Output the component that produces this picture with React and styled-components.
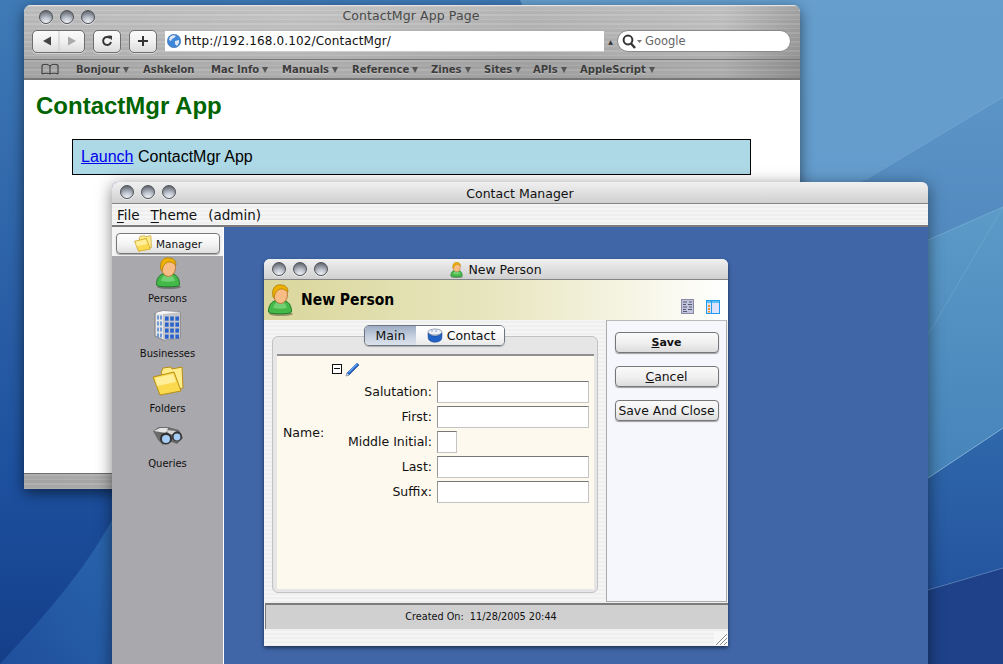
import React from 'react';
import styled, { createGlobalStyle } from 'styled-components';

const Global = createGlobalStyle`
  html, body { margin: 0; padding: 0; height: 100%; background: #3f78b4; }
  #root { height: 100%; }
  * { box-sizing: border-box; }
`;

const UI = `"DejaVu Sans", "Liberation Sans", sans-serif`;
const brushed = `
  repeating-linear-gradient(180deg, rgba(255,255,255,.07) 0 2px, rgba(0,0,0,.025) 2px 5px, rgba(255,255,255,.05) 5px 6px, rgba(0,0,0,.04) 6px 9px),
  linear-gradient(90deg, rgba(255,255,255,.0) 0%, rgba(255,255,255,.12) 35%, rgba(0,0,0,.03) 65%, rgba(255,255,255,.08) 90%, rgba(0,0,0,.14) 100%)
`;
const pinstripe = `repeating-linear-gradient(180deg, #f5f5f5 0 2px, #efefef 2px 4px)`;

const Desktop = styled.div`
  position: relative;
  width: 1003px;
  height: 664px;
  overflow: hidden;
  font-family: ${UI};
  background: linear-gradient(180deg, #3f7ab6 0%, #2a5fa6 45%, #1c4f9d 74%, #153e88 100%);
`;
const Wallpaper = styled.svg`
  position: absolute;
  inset: 0;
`;

const BrowserWindow = styled.div`
  position: absolute;
  left: 24px;
  top: 5px;
  width: 776px;
  height: 484px;
  display: flex;
  flex-direction: column;
  border-radius: 7px 7px 0 0;
  overflow: hidden;
  background: #fff;
  box-shadow: 0 4px 14px rgba(0,0,0,.55);
`;
const MetalTop = styled.div`
  height: 54px;
  flex: none;
  padding: 0 8px;
  display: flex;
  flex-direction: column;
  background: ${brushed}, linear-gradient(180deg, #c2c2c2 0%, #b0b0b0 100%);
  box-shadow: inset 0 1px 0 #e4e4e4;
`;
const MetalTitleRow = styled.div`
  position: relative;
  height: 24px;
  flex: none;
  display: flex;
  align-items: center;
  justify-content: center;
`;
const TrafficGroup = styled.div`
  position: absolute;
  left: ${p => p.$left}px;
  top: ${p => p.$top}px;
  display: flex;
  gap: ${p => p.$gap}px;
`;
const Dot = styled.span`
  display: block;
  width: ${p => p.$s}px;
  height: ${p => p.$s}px;
  border-radius: 50%;
  border: 1px solid #4f5257;
  background: radial-gradient(circle at 50% 100%, #f4f6fa 0%, #c0c6d0 40%, #686d76 85%);
  box-shadow: 0 1px 0 rgba(255,255,255,.5);
`;
const MetalTitle = styled.div`
  font-size: 12.5px;
  color: #4a4a4a;
  position: relative;
  left: -1px;
  top: -2px;
  letter-spacing: .1px;
`;
const ToolRow = styled.div`
  display: flex;
  align-items: center;
  height: 24px;
`;
const ToolBtn = styled.div`
  width: ${p => p.$w}px;
  height: 23px;
  flex: none;
  margin-right: ${p => p.$mr}px;
  border: 1px solid #6d6d6d;
  border-radius: 5px;
  background: linear-gradient(180deg, #fafafa 0%, #f0f0f0 50%, #dcdcdc 100%);
  display: flex;
  align-items: center;
  justify-content: center;
  box-shadow: 0 1px 0 rgba(255,255,255,.5);
`;
const UrlField = styled.div`
  width: 439px;
  height: 21px;
  flex: none;
  background: #fff;
  display: flex;
  align-items: center;
  padding-left: 2px;
  gap: 3px;
  font-size: 12px;
  letter-spacing: .15px;
  color: #111;
  border-bottom: 1px solid #ccc;
`;
const Snap = styled.div`
  width: 13px;
  flex: none;
  text-align: center;
  font-size: 6px;
  color: #333;
`;
const SearchField = styled.div`
  width: 174px;
  height: 22px;
  flex: none;
  background: #fff;
  border-radius: 11px;
  border: 1px solid #8a8a8a;
  display: flex;
  align-items: center;
  padding-left: 3px;
  font-size: 11.5px;
  color: #666;
  gap: 0;
`;
const BookmarkBar = styled.div`
  height: 21px;
  flex: none;
  display: flex;
  align-items: center;
  padding-left: 17px;
  border-top: 1px solid #777;
  border-bottom: 2px solid #777;
  background: ${brushed}, #a9a9a9;
`;
const BookIcon = styled.svg`
  flex: none;
  margin-right: 17px;
`;
const Bookmark = styled.div`
  width: ${p => p.$w}px;
  flex: none;
  font-size: 10px;
  font-weight: 700;
  color: #3c3c3c;
  white-space: nowrap;
  display: flex;
  align-items: center;
  gap: 3px;
  text-shadow: 0 1px 0 rgba(255,255,255,.3);
`;
const Arrow = styled.span`
  width: 0;
  height: 0;
  border-left: 3.5px solid transparent;
  border-right: 3.5px solid transparent;
  border-top: 6px solid #555;
  margin-top: 1px;
`;
const Page = styled.div`
  flex: 1;
  background: #fff;
  padding: 12px 13px 0 12px;
  font-family: "Liberation Sans", Arial, sans-serif;
`;
const Heading = styled.h1`
  margin: 0 0 19px;
  font-size: 24px;
  line-height: 28px;
  font-weight: 700;
  color: #006400;
`;
const LaunchBox = styled.div`
  margin-left: 36px;
  width: 679px;
  height: 36px;
  border: 1px solid #000;
  background: #add8e6;
  font-size: 16px;
  line-height: 34px;
  padding-left: 8px;
  color: #000;
  a { color: #0000ee; text-decoration: underline; }
`;
const MetalBottom = styled.div`
  height: 16px;
  flex: none;
  border-top: 1px solid #6e6e6e;
  background: ${brushed}, #aaa;
`;

const AppWindow = styled.div`
  position: absolute;
  left: 112px;
  top: 182px;
  width: 816px;
  height: 500px;
  display: flex;
  flex-direction: column;
  border-radius: 6px 6px 0 0;
  overflow: hidden;
  background: #4066a8;
  box-shadow: 0 3px 16px rgba(0,0,0,.5);
`;
const AquaTitle = styled.div`
  position: relative;
  height: ${p => p.$h}px;
  flex: none;
  display: flex;
  align-items: center;
  justify-content: center;
  gap: 5px;
  padding-top: 1px;
  font-size: 12.5px;
  color: #111;
  background: linear-gradient(180deg, #f0f0f0 0%, #d0d0d0 100%);
  border-bottom: 1px solid #848484;
`;
const MenuBar = styled.div`
  height: 23px;
  flex: none;
  display: flex;
  align-items: center;
  padding-left: 5px;
  gap: 11px;
  font-size: 13.5px;
  color: #111;
  background: ${pinstripe};
  border-bottom: 2px solid #7b7b7b;
  white-space: pre;
  u { text-underline-offset: 2px; }
`;
const AppBody = styled.div`
  flex: 1;
  display: flex;
  min-height: 0;
`;
const Sidebar = styled.div`
  width: 112px;
  flex: none;
  background: #a9a8ad;
  border-right: 1px solid #fff;
  display: flex;
  flex-direction: column;
`;
const SideHeader = styled.div`
  height: 29px;
  flex: none;
  background: #f4f4f4;
  padding: 6px 3px 2px 4px;
`;
const SideButton = styled.div`
  height: 21px;
  width: 104px;
  border: 1px solid #777;
  border-radius: 4px;
  background: linear-gradient(180deg, #fff 0%, #f3f3f3 55%, #dedede 100%);
  box-shadow: 0 1px 1px rgba(0,0,0,.3);
  display: flex;
  align-items: center;
  justify-content: center;
  gap: 4px;
  font-size: 10.5px;
  color: #111;
`;
const SideItem = styled.div`
  height: 55px;
  flex: none;
  display: flex;
  flex-direction: column;
  align-items: center;
  font-size: 10px;
  color: #111;
`;
const SideIconWrap = styled.div`
  height: 36px;
  display: flex;
  align-items: flex-end;
  justify-content: center;
  padding-bottom: ${p => p.$pb || 0}px;
`;
const SideLabel = styled.div`
  height: 19px;
  line-height: 13px;
`;
const Workspace = styled.div`
  position: relative;
  flex: 1;
  background: #4066a8;
`;

const PersonWindow = styled.div`
  position: absolute;
  left: 40px;
  top: 32px;
  width: 464px;
  height: 387px;
  display: flex;
  flex-direction: column;
  border-radius: 6px 6px 0 0;
  overflow: hidden;
  background: ${pinstripe};
  box-shadow: 0 2px 4px rgba(0,0,0,.55);
`;
const PersonHeader = styled.div`
  height: 40px;
  flex: none;
  display: flex;
  align-items: center;
  padding-left: 3px;
  gap: 8px;
  position: relative;
  background: linear-gradient(90deg, #dad69c 0%, #e8e6bf 50%, #ffffff 100%);
`;
const HeaderTitle = styled.div`
  font-size: 15.5px;
  font-stretch: condensed;
  font-weight: 700;
  color: #000;
`;
const HeaderTools = styled.div`
  position: absolute;
  right: 8px;
  bottom: 6px;
  display: flex;
  gap: 12px;
  align-items: flex-end;
`;
const PersonBody = styled.div`
  height: 283px;
  flex: none;
  display: flex;
`;
const LeftPane = styled.div`
  position: relative;
  width: 342px;
  flex: none;
  padding: 16px 0 9px 8px;
`;
const TabBox = styled.div`
  width: 326px;
  height: 257px;
  padding: 17px 3px 3px 4px;
  border: 1px solid #c2c2c2;
  border-radius: 6px;
  background: #e6e6e6;
`;
const TabStrip = styled.div`
  position: absolute;
  left: 100px;
  top: 5px;
  width: 141px;
  height: 21px;
  display: flex;
  border: 1px solid #6f7683;
  border-radius: 5px;
  overflow: hidden;
  font-size: 12.5px;
  color: #111;
  box-shadow: 0 1px 1px rgba(0,0,0,.25);
`;
const Tab = styled.div`
  width: ${p => p.$w}px;
  height: 100%;
  flex: none;
  display: flex;
  align-items: center;
  justify-content: center;
  gap: 4px;
  background: ${p => p.$active
    ? 'linear-gradient(180deg, #9eadc4 0%, #c6d0de 55%, #dbe2ec 100%)'
    : 'linear-gradient(180deg, #fff 0%, #f6f6f6 60%, #e8e8e8 100%)'};
`;
const Cream = styled.div`
  height: 100%;
  background: #fef9ee;
  border-top: 2px solid #909090;
  display: grid;
  grid-template-columns: 49px 1fr;
  padding: 2px 6px 0 6px;
`;
const NameLabel = styled.div`
  font-size: 12.5px;
  color: #111;
  height: 148px;
  display: flex;
  align-items: center;
`;
const FormCol = styled.div`
  display: flex;
  flex-direction: column;
`;
const TreeRow = styled.div`
  height: 21px;
  display: flex;
  align-items: center;
  gap: 3px;
`;
const Minus = styled.div`
  width: 10px;
  height: 10px;
  border: 1px solid #111;
  background: #fff;
  display: flex;
  align-items: center;
  justify-content: center;
  &::after { content: ''; width: 6px; height: 1px; background: #111; }
`;
const Row = styled.div`
  height: 25px;
  display: flex;
  align-items: center;
  justify-content: flex-end;
`;
const FieldRows = styled.div`
  margin-left: -9px;
  width: 266px;
`;
const FieldLabel = styled.div`
  width: 100px;
  flex: none;
  margin-right: 5px;
  text-align: right;
  font-size: 12.5px;
  color: #111;
  white-space: nowrap;
`;
const FieldBox = styled.div`
  height: 22px;
  width: ${p => p.$w}px;
  margin-right: ${p => 152 - p.$w}px;
  flex: none;
  background: #fff;
  border: 1px solid #c4c4c4;
  border-top: 1px solid #777;
  border-left: 1px solid #999;
`;
const ActionPane = styled.div`
  flex: 1;
  margin-right: 1px;
  background: #f5f7fd;
  border: 1px solid #aaa;
  border-top: 1px solid #bbb;
  display: flex;
  flex-direction: column;
  align-items: center;
  gap: 13px;
  padding: 11px 0 0;
  height: 282px;
`;
const ActionButton = styled.div`
  width: 104px;
  height: 21px;
  flex: none;
  border: 1px solid #777;
  border-radius: 4px;
  background: linear-gradient(180deg, #fafafa 0%, #efefef 55%, #dcdcdc 100%);
  box-shadow: 0 1px 1px rgba(0,0,0,.35);
  display: flex;
  align-items: center;
  justify-content: center;
  font-size: ${p => (p.$strong ? 11 : 12.4)}px;
  font-weight: ${p => (p.$strong ? 700 : 400)};
  color: #111;
  white-space: nowrap;
`;
const StatusBar = styled.div`
  height: 26px;
  flex: none;
  margin-left: 1px;
  background: #d0d0d0;
  border-top: 2px solid #7b7b7b;
  border-left: 1px solid #7b7b7b;
  display: flex;
  align-items: center;
  justify-content: center;
  font-size: 9.7px;
  color: #111;
  padding: 0 32px 2px 0;
  white-space: pre;
`;
const ResizeRow = styled.div`
  flex: 1;
  display: flex;
  justify-content: flex-end;
  align-items: flex-end;
`;
const GripBox = styled.div`
  width: 14px;
  height: 14px;
  background: #f8f8f8;
  display: flex;
`;

function Person({ s = 1 }) {
  return (
    <svg width={26 * s} height={32 * s} viewBox="0 0 26 32">
      <ellipse cx="14" cy="30" rx="12" ry="2" fill="rgba(0,0,0,.3)" />
      <path d="M1.5 28c0-8 4-12 11.5-12s11.5 4 11.5 12c0 2.500-23 2.500-23 0z" fill="#45b84a" stroke="#1f7a26" />
      <path d="M6 24c1-4 3-6 7-6s6 2 7 6c-4 1-10 1-14 0z" fill="#8fe08e" opacity=".6" />
      <ellipse cx="13.5" cy="10.5" rx="7" ry="9" fill="#f7bd84" stroke="#b9783c" />
      <path d="M6 13C4 4 9 0 14 1c5 0 7 3 7 7-2-2-5-3.500-8-3-2 1-4 2-5 5l-1 4z" fill="#eeb100" stroke="#a87500" strokeWidth=".7" />
    </svg>
  );
}
function Building() {
  const cells = [];
  for (let r = 0; r < 4; r++) for (let c = 0; c < 3; c++) cells.push(<rect key={`${r}${c}`} x={11 + c * 5.2} y={7.5 + r * 6} width="3.6" height="4.2" fill="#2a62cc" />);
  const side = [];
  for (let r = 0; r < 4; r++) for (let c = 0; c < 2; c++) side.push(<rect key={`s${r}${c}`} x={3 + c * 3} y={6.5 + r * 6} width="2" height="4" fill="#6e9ad6" />);
  return (
    <svg width="28" height="32" viewBox="0 0 28 32">
      <path d="M1 4l8-2 17 1v26L9 31 1 27z" fill="#e6e6e6" stroke="#7d7d7d" />
      <path d="M9 4l17-1v26L9 31z" fill="#c4c6ca" />
      <path d="M1 4l8-2 17 1-17 2z" fill="#fafafa" />
      {cells}{side}
    </svg>
  );
}
function Folder({ w = 32, h = 30 }) {
  return (
    <svg width={w} height={h} viewBox="0 0 32 30">
      <path d="M9 7l2-5 8-1 1 2 10-2 1 21-8 2z" fill="#ffec8a" stroke="#b98e14" />
      <path d="M1 11l21-5 7 19-21 4z" fill="#fbd94e" stroke="#b98e14" />
      <path d="M3 12l18-4 3 8-19 4z" fill="#fff2a8" opacity=".85" />
    </svg>
  );
}
function Binoculars() {
  return (
    <svg width="32" height="22" viewBox="0 0 32 22">
      <path d="M1 6l6-4h9l11 3 4 8-6 6-8-3-6 4-5-5z" fill="#6b6b6b" />
      <path d="M2 6l6-3h8l-2 5z" fill="#e4e4e4" />
      <path d="M15 5l9 1-1 3-7 1z" fill="#d4d4d4" />
      <circle cx="14" cy="13.5" r="6" fill="#333" />
      <circle cx="14" cy="14" r="4" fill="#a6cdf5" />
      <circle cx="25" cy="11.5" r="5" fill="#333" />
      <circle cx="25" cy="12" r="3.4" fill="#a6cdf5" />
    </svg>
  );
}
function Pen() {
  return (
    <svg width="16" height="16" viewBox="0 0 16 16">
      <path d="M2 12L12 2l2 2L4 14l-3 1z" fill="#1f5fc4" stroke="#123a7c" strokeWidth=".6" />
      <path d="M3 11l9-9 1 1-9 9z" fill="#6aa3ef" />
      <path d="M1 15l1-3 2 2z" fill="#dcdcdc" />
    </svg>
  );
}
function Cube() {
  return (
    <svg width="16" height="15" viewBox="0 0 16 15">
      <ellipse cx="8" cy="4" rx="7" ry="3" fill="#eef2f8" stroke="#5a6a88" strokeWidth=".6" />
      <path d="M1 5c0 3 0 6 1 7 3 3 9 3 12 0 1-1 1-4 1-7-3 4-11 4-14 0z" fill="#1f63c8" stroke="#123a7c" strokeWidth=".5" />
      <path d="M4 2l2-1v3H4zM8 1h2v3H8z" fill="#b9c6dc" />
    </svg>
  );
}
function Globe() {
  return (
    <svg width="14" height="14" viewBox="0 0 14 14">
      <circle cx="7" cy="7" r="6.7" fill="#3f87d8" stroke="#2b5f9e" strokeWidth=".5" />
      <path d="M3 3c2-2 4-2 6-1L7 4 5 5 4 7 2 6zM8 7l4-1 0 3-2 3-2-2z" fill="#dfe8f2" />
    </svg>
  );
}
function Magnifier() {
  return (
    <svg width="24" height="15" viewBox="0 0 24 15">
      <circle cx="7" cy="6" r="4.4" fill="none" stroke="#333" strokeWidth="2" />
      <path d="M10 9.500L14 14" stroke="#333" strokeWidth="2.400" />
      <path d="M16 6h5l-2.500 3z" fill="#777" />
    </svg>
  );
}
function ListIcon() {
  return (
    <svg width="13" height="15" viewBox="0 0 13 15">
      <rect x=".5" y=".5" width="12" height="14" fill="#c0c4dc" stroke="#8a8aa4" />
      <path d="M2 3h4M8 3h3M2 5.500h3M7 5.500h4M2 8h4M8 8h3M2 10.500h3M7 10.500h4M2 12.500h4" stroke="#5a5a76" strokeWidth="1" />
    </svg>
  );
}
function PanelIcon() {
  return (
    <svg width="14" height="14" viewBox="0 0 14 14">
      <rect x=".5" y=".5" width="13" height="13" fill="#dfe2fb" stroke="#1e9cf0" />
      <rect x="1" y="1" width="12" height="2" fill="#5cc0f7" />
      <rect x="5" y="1" width="1" height="12" fill="#1e9cf0" />
      <path d="M2 5h2v2H2zM2 8h2v2H2zM2 11h2v1.500H2z" fill="#f0902a" />
    </svg>
  );
}
function Grip() {
  return (
    <svg width="14" height="14" viewBox="0 0 14 14">
      <path d="M13 2L2 13M13 6L6 13M13 10l-3 3" stroke="#8a8a8a" strokeWidth="1" />
      <path d="M13 3.500L3.500 13M13 7.500L7.500 13M13 11.500L11.500 13" stroke="#fff" strokeWidth="1" />
    </svg>
  );
}
function Reload() {
  return (
    <svg width="12" height="12" viewBox="0 0 12 12">
      <path d="M9 3.200A4 4 0 1 0 10 7" fill="none" stroke="#333" strokeWidth="1.900" />
      <path d="M6.500 0.500l4.500 0.200-.2 4.600z" fill="#333" />
    </svg>
  );
}
function Plus() {
  return (
    <svg width="12" height="12" viewBox="0 0 12 12">
      <path d="M6 1v10M1 6h10" stroke="#333" strokeWidth="2" />
    </svg>
  );
}
function BackForward() {
  return (
    <svg width="50" height="20" viewBox="0 0 50 20">
      <path d="M25 0v20" stroke="#c8c8c8" />
      <path d="M9 10l8-4.500v9z" fill="#444" />
      <path d="M42 10l-8-4.500v9z" fill="#aaa" />
    </svg>
  );
}
function Book() {
  return (
    <BookIcon width="18" height="12" viewBox="0 0 18 12">
      <path d="M1 2c3-1 6-1 8 1 2-2 5-2 8-1v9c-3-1-6-1-8 0-2-1-5-1-8 0zM9 3v8" fill="none" stroke="#333" strokeWidth="1" />
    </BookIcon>
  );
}

const bookmarks = [
  ['Bonjour', 67, true], ['Ashkelon', 68, false], ['Mac Info', 71, true], ['Manuals', 70, true],
  ['Reference', 79, true], ['Zines', 53, true], ['Sites', 49, true], ['APIs', 47, true], ['AppleScript', 90, true],
];
const sideItems = [
  ['Persons', <Person />, 3], ['Businesses', <Building />, 6], ['Folders', <Folder />, 6], ['Queries', <Binoculars />, 10],
];
const fields = [
  ['Salutation:', 152], ['First:', 152], ['Middle Initial:', 20], ['Last:', 152], ['Suffix:', 152],
];

function Traffic({ left, top, gap, size }) {
  return (
    <TrafficGroup $left={left} $top={top} $gap={gap}>
      <Dot $s={size} /><Dot $s={size} /><Dot $s={size} />
    </TrafficGroup>
  );
}

export default function App() {
  return (
    <Desktop>
      <Global />
      <Wallpaper width="1003" height="664" viewBox="0 0 1003 664">
        <defs>
          <linearGradient id="ga" x1="0" y1="0" x2="0" y2="1">
            <stop offset="0" stopColor="#669ece" />
            <stop offset="1" stopColor="#5f97ca" />
          </linearGradient>
          <linearGradient id="gb" x1="0" y1="0" x2="0" y2="1">
            <stop offset="0" stopColor="#5b94c7" />
            <stop offset="1" stopColor="#4f86bc" />
          </linearGradient>
          <linearGradient id="gc" x1="0" y1="0" x2="0" y2="1">
            <stop offset="0" stopColor="#5c9ac8" />
            <stop offset="1" stopColor="#3e7cb5" />
          </linearGradient>
          <linearGradient id="gd" x1="0" y1="0" x2="0" y2="1">
            <stop offset="0" stopColor="#2f68ab" />
            <stop offset="1" stopColor="#214f9b" />
          </linearGradient>
          <linearGradient id="gs" x1="1" y1="0" x2="0" y2="1">
            <stop offset="0" stopColor="#2a66ae" />
            <stop offset="1" stopColor="#1f4f9c" />
          </linearGradient>
        </defs>
        <path d="M520 0H1003V664H800z" fill="url(#ga)" />
        <path d="M800 218L1003 97V207L800 296z" fill="url(#gb)" />
        <path d="M800 296L1003 207V428L800 563z" fill="url(#gc)" />
        <path d="M800 563L1003 428V568L800 627z" fill="url(#gd)" />
        <path d="M800 627L1003 568V664H800z" fill="#1e4189" />
        <path d="M865 180L1003 97" stroke="#86b8dc" opacity=".5" />
        <path d="M928 240L1003 207" stroke="#86b8dc" opacity=".5" />
        <path d="M928 335L1003 207" stroke="#86b8dc" opacity=".35" />
        <path d="M928 478L1003 428" stroke="#9cc8e2" opacity=".7" />
        <path d="M928 590L1003 568" stroke="#6f94c4" opacity=".6" />
        <path d="M112 520C90 560 60 600 0 664H112z" fill="url(#gs)" />
      </Wallpaper>

      <BrowserWindow>
        <MetalTop>
          <MetalTitleRow>
            <Traffic left={7} top={5} gap={7} size={14} />
            <MetalTitle>ContactMgr App Page</MetalTitle>
          </MetalTitleRow>
          <ToolRow>
            <ToolBtn $w={53} $mr={8}><BackForward /></ToolBtn>
            <ToolBtn $w={28} $mr={8}><Reload /></ToolBtn>
            <ToolBtn $w={28} $mr={8}><Plus /></ToolBtn>
            <UrlField><Globe />http://192.168.0.102/ContactMgr/</UrlField>
            <Snap>▲</Snap>
            <SearchField><Magnifier />Google</SearchField>
          </ToolRow>
        </MetalTop>
        <BookmarkBar>
          <Book />
          {bookmarks.map(([label, w, arrow]) => (
            <Bookmark key={label} $w={w}>{label}{arrow && <Arrow />}</Bookmark>
          ))}
        </BookmarkBar>
        <Page>
          <Heading>ContactMgr App</Heading>
          <LaunchBox><a href="#launch">Launch</a> ContactMgr App</LaunchBox>
        </Page>
        <MetalBottom />
      </BrowserWindow>

      <AppWindow>
        <AquaTitle $h={22}>
          <Traffic left={8} top={3} gap={7} size={14} />
          Contact Manager
        </AquaTitle>
        <MenuBar>
          <span><u>F</u>ile</span>
          <span><u>T</u>heme</span>
          <span>(admin)</span>
        </MenuBar>
        <AppBody>
          <Sidebar>
            <SideHeader>
              <SideButton><Folder w={18} h={17} />Manager</SideButton>
            </SideHeader>
            {sideItems.map(([label, icon, pb]) => (
              <SideItem key={label}>
                <SideIconWrap $pb={pb}>{icon}</SideIconWrap>
                <SideLabel>{label}</SideLabel>
              </SideItem>
            ))}
          </Sidebar>
          <Workspace>
            <PersonWindow>
              <AquaTitle $h={21}>
                <Traffic left={8} top={3} gap={7} size={14} />
                <Person s={0.5} />
                New Person
              </AquaTitle>
              <PersonHeader>
                <Person />
                <HeaderTitle>New Person</HeaderTitle>
                <HeaderTools><ListIcon /><PanelIcon /></HeaderTools>
              </PersonHeader>
              <PersonBody>
                <LeftPane>
                  <TabBox>
                    <Cream>
                      <NameLabel>Name:</NameLabel>
                      <FormCol>
                        <TreeRow><Minus /><Pen /></TreeRow>
                        <FieldRows>
                          {fields.map(([label, w]) => (
                            <Row key={label}>
                              <FieldLabel>{label}</FieldLabel>
                              <FieldBox $w={w} />
                            </Row>
                          ))}
                        </FieldRows>
                      </FormCol>
                    </Cream>
                  </TabBox>
                  <TabStrip>
                    <Tab $w={51} $active>Main</Tab>
                    <Tab $w={90}><Cube />Contact</Tab>
                  </TabStrip>
                </LeftPane>
                <ActionPane>
                  <ActionButton $strong><span><u>S</u>ave</span></ActionButton>
                  <ActionButton><span><u>C</u>ancel</span></ActionButton>
                  <ActionButton>Save And Close</ActionButton>
                </ActionPane>
              </PersonBody>
              <StatusBar>Created On:  11/28/2005 20:44</StatusBar>
              <ResizeRow><GripBox><Grip /></GripBox></ResizeRow>
            </PersonWindow>
          </Workspace>
        </AppBody>
      </AppWindow>
    </Desktop>
  );
}
